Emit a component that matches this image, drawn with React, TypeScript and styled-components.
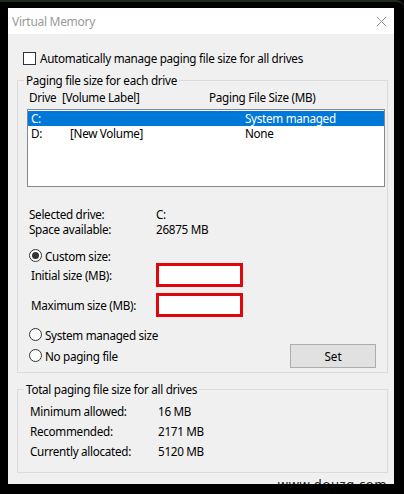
import styled, { createGlobalStyle } from 'styled-components';

const Global = createGlobalStyle`
  html, body {
    margin: 0;
    padding: 0;
    background: #000;
  }
  body {
    font-family: "Noto Sans", "Open Sans", sans-serif;
    font-size: 11.7px;
    letter-spacing: -0.3px;
    color: #000;
  }
`;

const drives = [
  { letter: 'C:', label: '', size: 'System managed', selected: true },
  { letter: 'D:', label: '[New Volume]', size: 'None', selected: false },
];

const totals = [
  { label: 'Minimum allowed:', value: '16 MB' },
  { label: 'Recommended:', value: '2171 MB' },
  { label: 'Currently allocated:', value: '5120 MB' },
];

export default function App() {
  return (
    <>
      <Global />
      <Screen>
        <Window>
          <TitleBar>
            <Title>Virtual Memory</Title>
            <CloseIcon viewBox="0 0 12 12">
              <path d="M1 1 L11 11 M11 1 L1 11" stroke="#8a8a8a" strokeWidth="1" fill="none" />
            </CloseIcon>
          </TitleBar>
          <Body>
            <CheckRow>
              <CheckBox />
              Automatically manage paging file size for all drives
            </CheckRow>

            <GroupBox>
              <Legend>Paging file size for each drive</Legend>
              <GroupInner>
                <ListHeader>
                  <span>Drive&nbsp;&nbsp;[Volume Label]</span>
                  <span>Paging File Size (MB)</span>
                </ListHeader>
                <DriveList>
                  {drives.map((d) => (
                    <DriveRow key={d.letter} $selected={d.selected}>
                      <span>{d.letter}</span>
                      <span>{d.label}</span>
                      <span>{d.size}</span>
                    </DriveRow>
                  ))}
                </DriveList>

                <InfoGrid>
                  <span>Selected drive:</span>
                  <span>C:</span>
                  <span>Space available:</span>
                  <span>26875 MB</span>
                </InfoGrid>

                <RadioRow $top={11}>
                  <Radio $checked />
                  Custom size:
                </RadioRow>

                <SizeRow>
                  <SizeLabel>Initial size (MB):</SizeLabel>
                  <SizeInput />
                </SizeRow>
                <SizeRow $top={6}>
                  <SizeLabel>Maximum size (MB):</SizeLabel>
                  <SizeInput />
                </SizeRow>

                <BottomRow>
                  <RadioColumn>
                    <RadioRow $tall>
                      <Radio />
                      System managed size
                    </RadioRow>
                    <RadioRow $tall>
                      <Radio />
                      No paging file
                    </RadioRow>
                  </RadioColumn>
                  <SetButton>Set</SetButton>
                </BottomRow>
              </GroupInner>
            </GroupBox>

            <GroupBox $top={9}>
              <Legend>Total paging file size for all drives</Legend>
              <TotalsGrid>
                {totals.map((t) => (
                  <TotalItem key={t.label}>
                    <span>{t.label}</span>
                    <span>{t.value}</span>
                  </TotalItem>
                ))}
              </TotalsGrid>
            </GroupBox>
          </Body>
          <Watermark>www.douzq.com</Watermark>
        </Window>
      </Screen>
    </>
  );
}

const Screen = styled.div`
  width: 404px;
  height: 494px;
  box-sizing: border-box;
  padding: 8px 10px 10px 8px;
  background: #000;
  border-top: 2px solid #1d2a1d;
  border-radius: 0 8px 0 0;
  overflow: hidden;
`;

const Window = styled.div`
  position: relative;
  width: 386px;
  height: 476px;
  margin-top: -2px;
  display: flex;
  flex-direction: column;
  background: #f0f0f0;
  overflow: hidden;
`;

const TitleBar = styled.div`
  height: 26px;
  flex: none;
  display: flex;
  align-items: center;
  justify-content: space-between;
  padding: 0 7px 0 4px;
  background: #fff;
`;

const Title = styled.span`
  color: #999;
  font-size: 12px;
`;

const CloseIcon = styled.svg`
  width: 11px;
  height: 11px;
`;

const Body = styled.div`
  flex: 1;
  display: flex;
  flex-direction: column;
  padding: 17px 6px 0 9px;
`;

const CheckRow = styled.label`
  display: flex;
  align-items: center;
  gap: 4px;
  height: 15px;
  line-height: 15px;
  padding-left: 6px;
  margin-bottom: 7px;
`;

const CheckBox = styled.span`
  width: 11px;
  height: 11px;
  border: 1px solid #333;
  background: #fff;
  flex: none;
`;

const GroupBox = styled.fieldset<{ $top?: number }>`
  margin: ${({ $top }) => $top ?? 0}px 0 0 0;
  padding: 0;
  border: 1px solid #dcdcdc;
  min-width: 0;
`;

const Legend = styled.legend`
  margin-left: 6px;
  padding: 0 2px;
  line-height: 15px;
`;

const GroupInner = styled.div`
  display: flex;
  flex-direction: column;
  padding: 2px 2px 6px 9px;
`;

const ListHeader = styled.div`
  display: grid;
  grid-template-columns: 180px 1fr;
  line-height: 15px;
  padding-left: 2px;
`;

const DriveList = styled.div`
  margin-top: 4px;
  height: 78px;
  box-sizing: border-box;
  border: 1px solid #828790;
  background: #fff;
  padding-top: 1px;
`;

const DriveRow = styled.div<{ $selected?: boolean }>`
  display: grid;
  grid-template-columns: 39px 175px 1fr;
  height: 15px;
  line-height: 15px;
  padding-left: 3px;
  background: ${({ $selected }) => ($selected ? '#0078d7' : 'transparent')};
  color: ${({ $selected }) => ($selected ? '#fff' : '#000')};
`;

const InfoGrid = styled.div`
  display: grid;
  grid-template-columns: 127px 1fr;
  line-height: 15px;
  margin-top: 20px;
  padding-left: 2px;
`;

const RadioRow = styled.div<{ $top?: number; $tall?: boolean }>`
  display: flex;
  align-items: center;
  gap: 3px;
  height: ${({ $tall }) => ($tall ? 21 : 15)}px;
  margin-top: ${({ $top }) => $top ?? 0}px;
  padding-left: 2px;
`;

const Radio = styled.span<{ $checked?: boolean }>`
  position: relative;
  width: 11px;
  height: 11px;
  border: 1px solid #333;
  border-radius: 50%;
  background: #fff;
  flex: none;

  &::after {
    content: '';
    display: ${({ $checked }) => ($checked ? 'block' : 'none')};
    position: absolute;
    left: 2px;
    top: 2px;
    width: 7px;
    height: 7px;
    border-radius: 50%;
    background: #333;
  }
`;

const SizeRow = styled.div<{ $top?: number }>`
  display: flex;
  align-items: center;
  height: 24px;
  margin-top: ${({ $top }) => $top ?? 0}px;
  padding-left: 4px;
`;

const SizeLabel = styled.span`
  width: 125px;
`;

const SizeInput = styled.div`
  width: 87px;
  height: 24px;
  box-sizing: border-box;
  border: 3px solid #e0060c;
  background: #fff;
`;

const BottomRow = styled.div`
  display: flex;
  align-items: flex-end;
  justify-content: space-between;
  margin-top: 7px;
  padding-right: 9px;
`;

const RadioColumn = styled.div`
  display: flex;
  flex-direction: column;
`;

const SetButton = styled.button`
  width: 86px;
  height: 24px;
  margin-bottom: -2px;
  border: 1px solid #adadad;
  background: #e1e1e1;
  font: inherit;
  color: #000;
  padding: 0;
`;

const TotalsGrid = styled.div`
  display: flex;
  flex-direction: column;
  padding: 4px 0 11px 12px;
`;

const TotalItem = styled.div`
  display: grid;
  grid-template-columns: 128px 1fr;
  line-height: 20px;
`;

const Watermark = styled.span`
  position: absolute;
  right: 7px;
  bottom: -9px;
  font-size: 13px;
  letter-spacing: 0.6px;
  color: #222;
`;
